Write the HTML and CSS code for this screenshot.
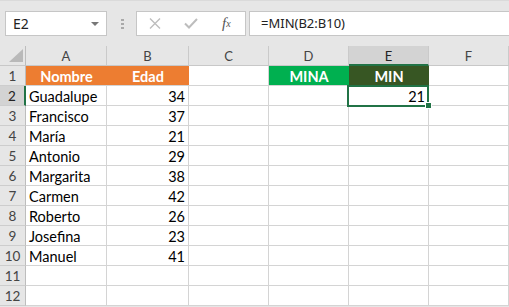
FILE: index.html
```html
<!DOCTYPE html>
<html>
<head>
  <meta charset="utf-8">
  <title>MIN</title>
  <link rel="stylesheet" href="styles.css">
</head>
<body>
  <div class="toolbar">
    <div class="namebox">E2 <span class="caret"></span></div>
    <div class="dots"><i></i><i></i><i></i></div>
    <div class="fxbox">
      <svg class="ico" width="12" height="11" viewBox="0 0 12 11"><path d="M1 0.5 L11 10.5 M11 0.5 L1 10.5" stroke="#bdbdbd" stroke-width="1.4" fill="none"/></svg>
      <svg class="ico" width="14" height="11" viewBox="0 0 14 11"><path d="M1 5.5 L5 9.5 L13 1" stroke="#bdbdbd" stroke-width="2" fill="none"/></svg>
      <span class="fx">f<sub>x</sub></span>
    </div>
    <div class="formula">=MIN(B2:B10)</div>
  </div>

  <div class="sheet">
    <div class="ch corner"><svg width="14" height="13" viewBox="0 0 14 13"><path d="M14 0 L14 13 L0 13 Z" fill="#b9b9b9"/></svg></div>
    <div class="ch">A</div><div class="ch">B</div><div class="ch">C</div><div class="ch">D</div><div class="ch on">E</div><div class="ch">F</div>

    <div class="rh">1</div><div class="cell hd orange">Nombre</div><div class="cell hd orange">Edad</div><div class="cell"></div><div class="cell hd green">MINA</div><div class="cell hd dark">MIN</div><div class="cell"></div>
    <div class="rh on">2</div><div class="cell">Guadalupe</div><div class="cell num">34</div><div class="cell"></div><div class="cell"></div><div class="cell num sel">21</div><div class="cell"></div>
    <div class="rh">3</div><div class="cell">Francisco</div><div class="cell num">37</div><div class="cell"></div><div class="cell"></div><div class="cell"></div><div class="cell"></div>
    <div class="rh">4</div><div class="cell">María</div><div class="cell num">21</div><div class="cell"></div><div class="cell"></div><div class="cell"></div><div class="cell"></div>
    <div class="rh">5</div><div class="cell">Antonio</div><div class="cell num">29</div><div class="cell"></div><div class="cell"></div><div class="cell"></div><div class="cell"></div>
    <div class="rh">6</div><div class="cell">Margarita</div><div class="cell num">38</div><div class="cell"></div><div class="cell"></div><div class="cell"></div><div class="cell"></div>
    <div class="rh">7</div><div class="cell">Carmen</div><div class="cell num">42</div><div class="cell"></div><div class="cell"></div><div class="cell"></div><div class="cell"></div>
    <div class="rh">8</div><div class="cell">Roberto</div><div class="cell num">26</div><div class="cell"></div><div class="cell"></div><div class="cell"></div><div class="cell"></div>
    <div class="rh">9</div><div class="cell">Josefina</div><div class="cell num">23</div><div class="cell"></div><div class="cell"></div><div class="cell"></div><div class="cell"></div>
    <div class="rh">10</div><div class="cell">Manuel</div><div class="cell num">41</div><div class="cell"></div><div class="cell"></div><div class="cell"></div><div class="cell"></div>
    <div class="rh">11</div><div class="cell"></div><div class="cell"></div><div class="cell"></div><div class="cell"></div><div class="cell"></div><div class="cell"></div>
    <div class="rh">12</div><div class="cell"></div><div class="cell"></div><div class="cell"></div><div class="cell"></div><div class="cell"></div><div class="cell"></div>
  </div>
</body>
</html>
```

FILE: styles.css
```css
body {
  margin: 0;
  background: #e6e6e6;
  font-family: Lato, "Liberation Sans", sans-serif;
  overflow: hidden;
}

.toolbar {
  height: 46px;
  box-sizing: border-box;
  padding: 11px 0 0 5px;
  display: flex;
  align-items: flex-start;
  border-top: 1px solid #dadada;
  font-family: "Noto Sans", "Open Sans", sans-serif;
  font-size: 14px;
  color: #222;
}
.namebox {
  width: 102px;
  height: 25px;
  margin-top: -1px;
  box-sizing: border-box;
  background: #fff;
  border: 1px solid #c6c6c6;
  padding-left: 7px;
  line-height: 22px;
  display: flex;
  justify-content: space-between;
  align-items: center;
}
.caret {
  width: 0;
  height: 0;
  border-left: 4px solid transparent;
  border-right: 4px solid transparent;
  border-top: 4px solid #777;
  margin-right: 7px;
}
.dots {
  margin: 7px 0 0 14px;
  width: 3px;
  display: flex;
  flex-direction: column;
  gap: 2px;
}
.dots i {
  display: block;
  width: 3px;
  height: 2px;
  background: #a9a9a9;
}
.fxbox {
  margin-left: 12px;
  margin-top: -1px;
  width: 110px;
  height: 25px;
  box-sizing: border-box;
  background: #fff;
  border: 1px solid #c6c6c6;
  display: flex;
  align-items: center;
  padding-left: 12px;
  gap: 23px;
}
.fx {
  font-family: "Liberation Serif", serif;
  font-style: italic;
  font-size: 15px;
  color: #555;
  margin-left: 1px;
}
.fx sub {
  font-size: 10px;
  vertical-align: 1px;
}
.formula {
  flex: 1;
  margin-left: 3px;
  margin-top: -1px;
  margin-right: -3px;
  height: 25px;
  box-sizing: border-box;
  background: #fff;
  border: 1px solid #c6c6c6;
  padding-left: 11px;
  line-height: 22px;
  font-size: 13px;
}

.sheet {
  display: grid;
  grid-template-columns: 26px 81px 82px 80px 80px 80px 80px;
  grid-auto-rows: 20px;
  font-size: 14.5px;
  color: #000;
}
.sheet > div {
  box-sizing: border-box;
  white-space: nowrap;
}
.ch {
  border-right: 1px solid #cacaca;
  border-bottom: 1px solid #c8c8c8;
  text-align: center;
  font-size: 13px;
  line-height: 20px;
  color: #444;
}
.ch.on {
  background: #d3d3d3;
  border-bottom: 2px solid #217346;
  color: #222;
}
.corner {
  display: flex;
  justify-content: flex-end;
  align-items: flex-end;
  padding: 0 2px 3px 0;
  border-right: 1px solid #bdbdbd;
}
.rh {
  border-right: 1px solid #bdbdbd;
  border-bottom: 1px solid #cdcdcd;
  text-align: center;
  font-size: 13.5px;
  line-height: 21px;
  color: #444;
}
.rh.on {
  background: #d3d3d3;
  border-right: 2px solid #217346;
  color: #222;
}
.cell {
  background: #fff;
  border-right: 1px solid #d4d4d4;
  border-bottom: 1px solid #d4d4d4;
  padding: 2px 3px 0 3px;
  line-height: 18px;
}
.num {
  text-align: right;
}
.hd {
  font-weight: bold;
  color: #fff;
  text-align: center;
  border-right: none;
}
.orange {
  background: #ed7d31;
}
.green {
  background: #00b050;
}
.dark {
  background: #375623;
}
.sel {
  position: relative;
}
.sel::before {
  content: "";
  position: absolute;
  left: -2px;
  top: -1px;
  right: -1px;
  bottom: -2px;
  border: 2px solid #217346;
}
.sel::after {
  content: "";
  position: absolute;
  right: -4px;
  bottom: -4px;
  width: 5px;
  height: 5px;
  background: #217346;
  border: 1px solid #fff;
}
```
